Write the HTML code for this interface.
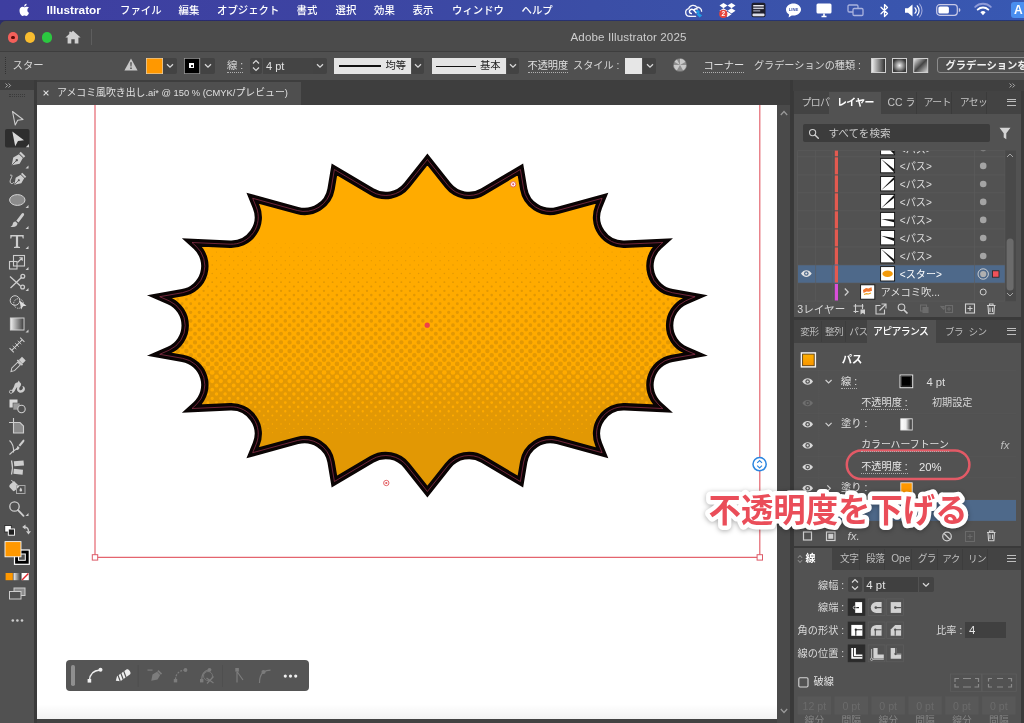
<!DOCTYPE html>
<html lang="ja"><head><meta charset="utf-8"><title>Adobe Illustrator 2025</title>
<style>
html,body{margin:0;padding:0}
body{width:1024px;height:723px;overflow:hidden;position:relative;background:#4e4e4e;font-family:"Liberation Sans","Noto Sans CJK JP",sans-serif;-webkit-font-smoothing:antialiased}
#root{position:absolute;left:0;top:0;width:1024px;height:723px;overflow:hidden;will-change:transform}
.a{position:absolute}
.t{position:absolute;white-space:nowrap;color:#dcdcdc;font-size:10.5px;line-height:12px;height:12px}
.b{font-weight:bold}
.u{border-bottom:1px dotted #b0b0b0;height:12px}
svg{position:absolute;overflow:visible}
/* menubar */
#mb{left:0;top:0;width:1024px;height:21px;background:linear-gradient(90deg,#3e3ea0 0%,#3d43a2 30%,#3b4ea6 58%,#3a53ab 78%,#3858b2 100%);box-shadow:inset 0 -1px 0 rgba(15,15,45,.45)}
#mb .t{color:#fff;font-size:10.6px;top:4px}
/* window */
#win{left:0;top:21px;width:1024px;height:702px;background:#4c4c4c;border-top-left-radius:6px}
#ttl{left:0;top:21px;width:1024px;height:30px;background:#4b4b4b;border-top-left-radius:6px}
#ctl{left:0;top:51px;width:1024px;height:29px;background:#505050;border-top:1px solid #3e3e3e;box-sizing:border-box}
#tabs{left:0;top:80px;width:1024px;height:25px;background:#3e3e3e}
.dd{position:absolute;background:#434343;border-radius:0 2px 2px 0}
.fld{position:absolute;background:#444}
.lt{position:absolute;background:#e4e4e4}
</style></head><body><div id="root">
<div id="mb" class="a">
<svg style="left:19px;top:3px" width="11" height="14" viewBox="0 0 170 205"><path fill="#fff" d="M150 68c-1 1-21 12-21 37 0 29 25 39 26 40-1 1-4 14-13 27-8 11-16 22-28 22s-15-7-30-7c-14 0-19 7-30 7s-19-10-28-23C16 156 8 132 8 109c0-37 24-56 47-56 13 0 23 8 31 8 7 0 19-9 33-9 5 0 24 1 37 16zM108 34c6-7 10-17 10-26 0-1 0-3-1-4-9 0-21 6-27 14-5 6-10 16-10 26 0 2 0 3 1 4h3c9 0 19-6 24-14z"/></svg>
<div class="t b" style="left:46.5px;font-size:11.8px;top:4.2px">Illustrator</div>
<div class="t" style="left:120px;top:4.5px;font-size:10.4px;color:#fff;font-weight:500;">ファイル</div>
<div class="t" style="left:178.5px;top:4.5px;font-size:10.4px;color:#fff;font-weight:500;">編集</div>
<div class="t" style="left:217px;top:4.5px;font-size:10.4px;color:#fff;font-weight:500;">オブジェクト</div>
<div class="t" style="left:296.5px;top:4.5px;font-size:10.4px;color:#fff;font-weight:500;">書式</div>
<div class="t" style="left:335.5px;top:4.5px;font-size:10.4px;color:#fff;font-weight:500;">選択</div>
<div class="t" style="left:374px;top:4.5px;font-size:10.4px;color:#fff;font-weight:500;">効果</div>
<div class="t" style="left:412.5px;top:4.5px;font-size:10.4px;color:#fff;font-weight:500;">表示</div>
<div class="t" style="left:452px;top:4.5px;font-size:10.4px;color:#fff;font-weight:500;">ウィンドウ</div>
<div class="t" style="left:521.5px;top:4.5px;font-size:10.4px;color:#fff;font-weight:500;">ヘルプ</div>
<!-- status icons -->
<svg style="left:685px;top:3.500px" width="18" height="14" viewBox="0 0 18 14"><path d="M4.600 12.300a3.900 3.900 0 0 1-.9-7.700 4.700 4.700 0 0 1 8.300-1.300 4 4 0 0 1 4.600 3.900" fill="none" stroke="#f4f4fb" stroke-width="1.350" stroke-linecap="round"/><path d="M4.600 12.300h6" fill="none" stroke="#f4f4fb" stroke-width="1.350" stroke-linecap="round"/><path d="M6.300 9.600c-1.900-.3-2.600-2.600-1-3.800 1.300-1 2.800-.4 3.800.7l2 2.300M9.300 5.600c.8-.8 1.900-1 2.900-.6" fill="none" stroke="#fff" stroke-width="1.500" stroke-linecap="round"/><path d="M10.600 7.300l2.300-1.600 2.200 2.400-1.300 1 3.400 2.300-2.500 2.200-3.200-3 1.200-1z" fill="#1f9be6"/></svg>
<svg style="left:719.400px;top:2px" width="17" height="16" viewBox="0 0 17 16"><path fill="#fff" d="M4.500 1 8.500 3.600 4.500 6.200.5 3.600zM12.500 1l4 2.600-4 2.600-4-2.600zM.5 8.800l4-2.600 4 2.600-4 2.600zM12.500 6.200l4 2.600-4 2.600-4-2.600zM4.500 12.300l4-2.600 4 2.600-4 2.600z"/><circle cx="4.300" cy="11.900" r="4.100" fill="#e8453c"/><text x="4.300" y="14.200" font-size="6.500" font-weight="bold" fill="#fff" text-anchor="middle" font-family="Liberation Sans, sans-serif">2</text></svg>
<svg style="left:750px;top:2px" width="17" height="16" viewBox="0 0 17 16"><rect x="1.500" y=".8" width="14" height="14.400" rx="2" fill="#1d1d2b"/><rect x="3.200" y="3" width="10.600" height="1.500" fill="#e6e6ee"/><rect x="3.200" y="5.600" width="10.600" height="1.500" fill="#c9c9d6"/><rect x="3.200" y="8.200" width="7" height="1.300" fill="#9d9db0"/><rect x="2.500" y="11.600" width="12" height="2.600" rx="1" fill="#dedee8"/></svg>
<svg style="left:785px;top:1.500px" width="17" height="17" viewBox="0 0 17 17"><path d="M8.500 1.500c4.100 0 7.500 2.700 7.500 6.100 0 3.300-3.400 6-7.500 6-.6 0-1.200-.1-1.800-.2L3.600 15.500l.5-2.900C2.200 11.500 1 9.700 1 7.600c0-3.400 3.400-6.100 7.500-6.100z" fill="#fff"/><text x="8.500" y="9.300" font-size="4.200" font-weight="bold" fill="#3b52a8" text-anchor="middle" font-family="Liberation Sans, sans-serif">LINE</text></svg>
<svg style="left:815px;top:2px" width="18" height="16" viewBox="0 0 18 16"><rect x="1.500" y="1.500" width="15" height="10" rx="1.500" fill="#fff"/><path d="M6.500 14.500h5M9 11.500v3" stroke="#fff" stroke-width="1.600" fill="none"/></svg>
<svg style="left:847px;top:3px" width="18" height="14" viewBox="0 0 18 14"><rect x="1" y="2" width="10" height="7" rx="1.200" fill="none" stroke="#a9b2de" stroke-width="1.300"/><rect x="6" y="5.500" width="10" height="7" rx="1.200" fill="#3a54ac" stroke="#a9b2de" stroke-width="1.300"/></svg>
<svg style="left:880px;top:2.500px" width="9" height="15" viewBox="0 0 9 15"><path d="M1 4.200 7.500 10.500 4.500 13.500V1.500l3 3L1 10.800" fill="none" stroke="#fff" stroke-width="1.250" stroke-linejoin="round" stroke-linecap="round"/></svg>
<svg style="left:904px;top:2.500px" width="20" height="15" viewBox="0 0 20 15"><path d="M1 5.200h3L8.500 1.500v12L4 9.800H1z" fill="#fff"/><path d="M11 4.800a4 4 0 0 1 0 5.400M13.300 2.800a7 7 0 0 1 0 9.400" fill="none" stroke="#fff" stroke-width="1.250" stroke-linecap="round"/><path d="M15.600 1a10 10 0 0 1 0 13" fill="none" stroke="#9fa8dc" stroke-width="1.100" stroke-linecap="round"/></svg>
<svg style="left:936px;top:4px" width="25" height="12" viewBox="0 0 25 12"><rect x=".7" y=".7" width="20.600" height="10.600" rx="3" fill="none" stroke="#c8c9e6" stroke-width="1.200"/><rect x="2.400" y="2.400" width="10.500" height="7.200" rx="1.600" fill="#fff"/><path d="M22.800 4v4c1.200-.4 1.600-1.200 1.600-2s-.4-1.600-1.600-2z" fill="#c8c9e6"/></svg>
<svg style="left:974px;top:3px" width="18" height="13" viewBox="0 0 18 13"><path d="M9 12.200 6.400 9.300a3.700 3.700 0 0 1 5.200 0z" fill="#fff"/><path d="M3.700 6.600a7.600 7.600 0 0 1 10.600 0" fill="none" stroke="#fff" stroke-width="1.900" stroke-linecap="round"/><path d="M1.200 3.900a11.300 11.300 0 0 1 15.600 0" fill="none" stroke="#8f9bd8" stroke-width="1.900" stroke-linecap="round"/></svg>
<div class="a" style="left:1011px;top:2px;width:16px;height:16px;border-radius:3px;background:#4a8ff0"></div>
<div class="t b" style="left:1014px;top:3.500px;font-size:12px;color:#fff;line-height:13px">A</div>
</div>

<div class="a" style="left:0;top:20px;width:10px;height:10px;background:#2b2d68"></div>
<div id="win" class="a"></div>
<div id="ttl" class="a"></div>
<div class="a" style="left:7.600px;top:32.300px;width:10.500px;height:10.500px;border-radius:50%;background:#f4605a"></div>
<div class="a" style="left:11px;top:35.700px;width:3.700px;height:3.700px;border-radius:50%;background:#5a0a08"></div>
<div class="a" style="left:24.600px;top:32.300px;width:10.500px;height:10.500px;border-radius:50%;background:#f9bd2f"></div>
<div class="a" style="left:41.600px;top:32.300px;width:10.500px;height:10.500px;border-radius:50%;background:#2bc840"></div>
<svg style="left:65px;top:30px" width="16" height="14" viewBox="0 0 16 14"><path d="M8 .8 15.600 7.400h-2.200V13.500H9.700V9.200H6.300v4.300H2.600V7.400H.4L4.300 4V1.800h1.800v.7z" fill="#cfcfcf"/></svg>
<div class="a" style="left:90.500px;top:29px;width:1px;height:16px;background:#5e5e5e"></div>
<div class="t" style="left:570.500px;top:30.500px;font-size:11.600px;color:#cdcdcd;letter-spacing:.12px">Adobe Illustrator 2025</div>

<div id="ctl" class="a"></div>
<div class="a" style="left:5px;top:57px;width:0;height:17px;border-left:1px dotted #333"></div>
<div class="t" style="left:12.5px;top:59.5px;font-size:10.4px;color:#d6d6d6;">スター</div>
<svg style="left:124px;top:58px" width="14" height="13" viewBox="0 0 14 13"><path d="M7 .5 13.600 12.500H.4z" fill="#c8c8c8"/><path d="M6.300 4.300h1.400l-.25 4.300h-.9zM6.300 9.600h1.400V11H6.300z" fill="#444"/></svg>
<div class="a" style="left:146px;top:57.500px;width:16.500px;height:16px;background:#ff9800;box-shadow:inset 0 0 0 .6px #d9d9d9"></div>
<div class="dd" style="left:163px;top:57.500px;width:14px;height:16px"></div>
<svg style="left:166px;top:63px" width="8" height="6" viewBox="0 0 8 6"><path d="M1 1.200 4 4.200 7 1.200" fill="none" stroke="#d8d8d8" stroke-width="1.300"/></svg>
<div class="a" style="left:183.500px;top:57.500px;width:16px;height:16px;background:#000;box-shadow:inset 0 0 0 .8px #9a9a9a"></div>
<div class="a" style="left:189px;top:63px;width:5px;height:5px;background:#fff"></div>
<div class="a" style="left:190.500px;top:64.500px;width:2px;height:2px;background:#222"></div>
<div class="dd" style="left:200.500px;top:57.500px;width:14px;height:16px"></div>
<svg style="left:203.500px;top:63px" width="8" height="6" viewBox="0 0 8 6"><path d="M1 1.200 4 4.200 7 1.200" fill="none" stroke="#d8d8d8" stroke-width="1.300"/></svg>
<div class="t u" style="left:227px;top:59.500px;font-size:10.4px;color:#d6d6d6;">線<span style="margin-left:.28em"></span>:</div>
<div class="dd" style="left:249.500px;top:57.500px;width:12px;height:16px;border-radius:2px"></div>
<svg style="left:251.500px;top:59px" width="8" height="13" viewBox="0 0 8 13"><path d="M1 4.500 4 1.500 7 4.500M1 8.500 4 11.500 7 8.500" fill="none" stroke="#d8d8d8" stroke-width="1.200"/></svg>
<div class="fld" style="left:263px;top:57.500px;width:49.500px;height:16px"></div>
<div class="t" style="left:266px;top:59.500px;font-size:11px;color:#e2e2e2">4 pt</div>
<div class="dd" style="left:313px;top:57.500px;width:13.500px;height:16px"></div>
<svg style="left:315.500px;top:63px" width="8" height="6" viewBox="0 0 8 6"><path d="M1 1.200 4 4.200 7 1.200" fill="none" stroke="#d8d8d8" stroke-width="1.300"/></svg>
<div class="lt" style="left:333.500px;top:57.500px;width:77.500px;height:16.500px"></div>
<div class="a" style="left:338.500px;top:65px;width:42px;height:2px;background:#111"></div>
<div class="t" style="left:385.500px;top:59.500px;font-size:10.3px;color:#1c1c1c;">均等</div>
<div class="dd" style="left:412px;top:57.500px;width:12px;height:16.500px"></div>
<svg style="left:414px;top:63px" width="8" height="6" viewBox="0 0 8 6"><path d="M1 1.200 4 4.200 7 1.200" fill="none" stroke="#d8d8d8" stroke-width="1.300"/></svg>
<div class="lt" style="left:431.500px;top:57.500px;width:74px;height:16.500px"></div>
<div class="a" style="left:436px;top:65.500px;width:39.500px;height:1px;background:#111"></div>
<div class="t" style="left:480px;top:59.500px;font-size:10.3px;color:#1c1c1c;">基本</div>
<div class="dd" style="left:506.500px;top:57.500px;width:12.500px;height:16.500px"></div>
<svg style="left:508.700px;top:63px" width="8" height="6" viewBox="0 0 8 6"><path d="M1 1.200 4 4.200 7 1.200" fill="none" stroke="#d8d8d8" stroke-width="1.300"/></svg>
<div class="t u" style="left:527.500px;top:59.500px;font-size:10.2px;color:#e0e0e0;">不透明度</div>
<div class="t" style="left:573px;top:59.500px;font-size:10.2px;color:#d6d6d6;">スタイル<span style="margin-left:.28em"></span>:</div>
<div class="a" style="left:625px;top:57.500px;width:17px;height:16.500px;background:#e6e6e6"></div>
<div class="dd" style="left:643px;top:57.500px;width:13px;height:16.500px"></div>
<svg style="left:645.500px;top:63px" width="8" height="6" viewBox="0 0 8 6"><path d="M1 1.200 4 4.200 7 1.200" fill="none" stroke="#d8d8d8" stroke-width="1.300"/></svg>
<svg style="left:672.500px;top:57.700px" width="14" height="14" viewBox="0 0 14 14"><circle cx="7" cy="7" r="6.600" fill="#8e8e8e"/><path d="M7 7 7 .4A6.600 6.600 0 0 1 12.700 3.700zM7 7 13.600 7A6.600 6.600 0 0 1 10.300 12.700zM7 7 3.700 12.700A6.600 6.600 0 0 1 .4 7zM7 7 1.300 3.700A6.600 6.600 0 0 1 3.700 1.300z" fill="#c9c9c9"/><circle cx="7" cy="7" r="6.600" fill="none" stroke="#6a6a6a" stroke-width=".6"/></svg>
<div class="t u" style="left:703.400px;top:59.500px;font-size:10.2px;color:#e0e0e0;">コーナー</div>
<div class="t" style="left:754px;top:59.500px;font-size:10.15px;color:#d6d6d6;">グラデーションの種類<span style="margin-left:.28em"></span>:</div>
<svg style="left:870.500px;top:57.500px" width="58" height="15" viewBox="0 0 58 15"><defs><linearGradient id="lg1"><stop offset="0" stop-color="#f2f2f2"/><stop offset="1" stop-color="#2a2a2a"/></linearGradient><radialGradient id="rg1"><stop offset="0" stop-color="#f2f2f2"/><stop offset="1" stop-color="#3a3a3a"/></radialGradient><linearGradient id="lg2" x1="0" y1="0" x2="1" y2="1"><stop offset="0" stop-color="#eee"/><stop offset=".5" stop-color="#444"/><stop offset="1" stop-color="#ddd"/></linearGradient></defs><rect x=".5" y=".5" width="14" height="14" fill="url(#lg1)" stroke="#cfcfcf"/><rect x="21.500" y=".5" width="14" height="14" fill="url(#rg1)" stroke="#cfcfcf"/><rect x="42.700" y=".5" width="14" height="14" fill="url(#lg2)" stroke="#cfcfcf"/></svg>
<div class="a" style="left:936.500px;top:57px;width:100px;height:15.500px;border:1px solid #8c8c8c;border-radius:3px;box-sizing:border-box"></div>
<div class="t b" style="left:945.500px;top:59.500px;font-size:10.3px;color:#f0f0f0;">グラデーションを</div>

<div id="tabs" class="a"></div>
<div class="a" style="left:0;top:80px;width:34px;height:10px;background:#3f3f3f"></div>
<div class="a" style="left:0;top:90px;width:34px;height:633px;background:#515151"></div>
<div class="a" style="left:34px;top:80px;width:2.500px;height:643px;background:#3a3a3a"></div>
<svg style="left:4.5px;top:82.5px" width="7" height="5" viewBox="0 0 7 5"><path d="M.6 .5 2.600 2.500 .6 4.500M3.600 .5 5.600 2.500 3.600 4.500" fill="none" stroke="#c4c4c4" stroke-width=".8"/></svg>
<div class="a" style="left:9px;top:94px;width:16px;height:3px;border-top:1px dotted #3a3a3a;border-bottom:1px dotted #3a3a3a;box-sizing:border-box"></div>
<div class="a" style="left:36.500px;top:81.500px;width:264px;height:24px;background:#4f4f4f"></div>
<svg style="left:43px;top:90.300px" width="6" height="6" viewBox="0 0 6 6"><path d="M.6 .6 5.400 5.400M5.400 .6 .6 5.400" fill="none" stroke="#e0e0e0" stroke-width="1.100"/></svg>
<div class="t" style="left:57px;top:87px;font-size:9.9px;color:#e0e0e0;">アメコミ風吹き出し<span style="font-size:9.35px">.ai* @ 150 % (CMYK/</span>プレビュー<span style="font-size:9.35px">)</span></div>

<div class="a" style="left:36.500px;top:105.300px;width:740.500px;height:613.400px;background:#fff"></div>
<div class="a" id="cvshade" style="left:36.500px;top:704px;width:740.500px;height:14.700px;background:linear-gradient(rgba(0,0,0,0),rgba(0,0,0,.05))"></div>
<div class="a" style="left:36.500px;top:718.700px;width:753.500px;height:5px;background:#424242"></div>
<div class="a" style="left:777px;top:105px;width:13px;height:618px;background:#4a4a4a"></div>
<div class="a" style="left:790px;top:80px;width:2.800px;height:643px;background:#393939"></div>
<svg style="left:780px;top:110px" width="8" height="6" viewBox="0 0 8 6"><path d="M.8 5 4 1.500 7.200 5" fill="none" stroke="#9a9a9a" stroke-width="1.200"/></svg>
<svg style="left:780px;top:708px" width="8" height="6" viewBox="0 0 8 6"><path d="M.8 1 4 4.500 7.200 1" fill="none" stroke="#9a9a9a" stroke-width="1.200"/></svg>
<svg style="left:0;top:0" width="1024" height="723" viewBox="0 0 1024 723">
<defs>
<clipPath id="cv"><rect x="36.500" y="105" width="740.500" height="613"/></clipPath>
<pattern id="ht" width="8.600" height="8.600" patternUnits="userSpaceOnUse" patternTransform="translate(427.200 325.200) rotate(45)"><circle cx="0" cy="0" r="2"/><circle cx="8.600" cy="0" r="2"/><circle cx="0" cy="8.600" r="2"/><circle cx="8.600" cy="8.600" r="2"/></pattern>
<clipPath id="sc"><path d="M427.4 159.5L406.9 185.3A27.0 27.0 0 0 1 372.0 191.7L334.4 169.5L331.1 189.0A27.0 27.0 0 0 1 297.4 210.5L252.7 198.3L256.2 206.9A27.0 27.0 0 0 1 230.1 244.2L192.0 242.5L196.0 246.1A27.0 27.0 0 0 1 182.5 292.7L159.7 296.7L169.1 300.8A27.0 27.0 0 0 1 169.1 350.2L159.7 354.3L182.5 358.3A27.0 27.0 0 0 1 196.0 404.9L192.0 408.5L230.1 406.8A27.0 27.0 0 0 1 256.2 444.1L252.7 452.7L297.4 440.5A27.0 27.0 0 0 1 331.1 462.0L334.4 481.5L372.0 459.3A27.0 27.0 0 0 1 406.9 465.7L427.4 491.5L447.9 465.7A27.0 27.0 0 0 1 482.8 459.3L520.4 481.5L523.7 462.0A27.0 27.0 0 0 1 557.4 440.5L602.1 452.7L598.6 444.1A27.0 27.0 0 0 1 624.7 406.8L662.8 408.5L658.8 404.9A27.0 27.0 0 0 1 672.3 358.3L695.1 354.3L685.7 350.2A27.0 27.0 0 0 1 685.7 300.8L695.1 296.7L672.3 292.7A27.0 27.0 0 0 1 658.8 246.1L662.8 242.5L624.7 244.2A27.0 27.0 0 0 1 598.6 206.9L602.1 198.3L557.4 210.5A27.0 27.0 0 0 1 523.7 189.0L520.4 169.5L482.8 191.7A27.0 27.0 0 0 1 447.9 185.3L427.4 159.5Z"/></clipPath>
</defs>
<g clip-path="url(#cv)">
<path d="M95 100V557.400H759.800V100" fill="none" stroke="#e4646e" stroke-width="1.200"/>
<path id="starp" d="M427.4 159.5L406.9 185.3A27.0 27.0 0 0 1 372.0 191.7L334.4 169.5L331.1 189.0A27.0 27.0 0 0 1 297.4 210.5L252.7 198.3L256.2 206.9A27.0 27.0 0 0 1 230.1 244.2L192.0 242.5L196.0 246.1A27.0 27.0 0 0 1 182.5 292.7L159.7 296.7L169.1 300.8A27.0 27.0 0 0 1 169.1 350.2L159.7 354.3L182.5 358.3A27.0 27.0 0 0 1 196.0 404.9L192.0 408.5L230.1 406.8A27.0 27.0 0 0 1 256.2 444.1L252.7 452.7L297.4 440.5A27.0 27.0 0 0 1 331.1 462.0L334.4 481.5L372.0 459.3A27.0 27.0 0 0 1 406.9 465.7L427.4 491.5L447.9 465.7A27.0 27.0 0 0 1 482.8 459.3L520.4 481.5L523.7 462.0A27.0 27.0 0 0 1 557.4 440.5L602.1 452.7L598.6 444.1A27.0 27.0 0 0 1 624.7 406.8L662.8 408.5L658.8 404.9A27.0 27.0 0 0 1 672.3 358.3L695.1 354.3L685.7 350.2A27.0 27.0 0 0 1 685.7 300.8L695.1 296.7L672.3 292.7A27.0 27.0 0 0 1 658.8 246.1L662.8 242.5L624.7 244.2A27.0 27.0 0 0 1 598.6 206.9L602.1 198.3L557.4 210.5A27.0 27.0 0 0 1 523.7 189.0L520.4 169.5L482.8 191.7A27.0 27.0 0 0 1 447.9 185.3L427.4 159.5Z" fill="#ffab00"/>
<g clip-path="url(#sc)"><rect x="140" y="370.35" width="576" height="129.65" fill="#e29804"/><g stroke="#e29804" stroke-linecap="round" fill="none" stroke-dasharray="0 8.6"><path d="M139.10 243.50H716" stroke-width="0.50"/><path d="M134.80 247.80H716" stroke-width="0.74"/><path d="M139.10 252.10H716" stroke-width="0.92"/><path d="M134.80 256.40H716" stroke-width="1.08"/><path d="M139.10 260.70H716" stroke-width="1.21"/><path d="M134.80 265.00H716" stroke-width="1.33"/><path d="M139.10 269.30H716" stroke-width="1.44"/><path d="M134.80 273.60H716" stroke-width="1.54"/><path d="M139.10 277.90H716" stroke-width="1.64"/><path d="M134.80 282.20H716" stroke-width="1.84"/><path d="M139.10 286.50H716" stroke-width="2.11"/><path d="M134.80 290.80H716" stroke-width="2.35"/><path d="M139.10 295.10H716" stroke-width="2.57"/><path d="M134.80 299.40H716" stroke-width="2.77"/><path d="M139.10 303.70H716" stroke-width="2.96"/><path d="M134.80 308.00H716" stroke-width="3.14"/><path d="M139.10 312.30H716" stroke-width="3.31"/><path d="M134.80 316.60H716" stroke-width="3.47"/><path d="M139.10 320.90H716" stroke-width="3.62"/><path d="M134.80 325.20H716" stroke-width="3.76"/><path d="M139.10 329.50H716" stroke-width="3.88"/><path d="M134.80 333.80H716" stroke-width="4.00"/><path d="M139.10 338.10H716" stroke-width="4.11"/><path d="M134.80 342.40H716" stroke-width="4.22"/><path d="M139.10 346.70H716" stroke-width="4.32"/><path d="M134.80 351.00H716" stroke-width="4.42"/><path d="M139.10 355.30H716" stroke-width="4.52"/><path d="M134.80 359.60H716" stroke-width="4.62"/><path d="M139.10 363.90H716" stroke-width="4.72"/><path d="M134.80 368.20H716" stroke-width="4.81"/></g><g stroke="#ffab00" stroke-linecap="round" fill="none" stroke-dasharray="0 8.6"><path d="M134.80 372.50H716" stroke-width="4.73"/><path d="M139.10 376.80H716" stroke-width="4.51"/><path d="M134.80 381.10H716" stroke-width="4.28"/><path d="M139.10 385.40H716" stroke-width="4.04"/><path d="M134.80 389.70H716" stroke-width="3.78"/><path d="M139.10 394.00H716" stroke-width="3.50"/><path d="M134.80 398.30H716" stroke-width="3.20"/><path d="M139.10 402.60H716" stroke-width="2.92"/><path d="M134.80 406.90H716" stroke-width="2.66"/><path d="M139.10 411.20H716" stroke-width="2.37"/><path d="M134.80 415.50H716" stroke-width="2.04"/><path d="M139.10 419.80H716" stroke-width="1.72"/><path d="M134.80 424.10H716" stroke-width="1.48"/><path d="M139.10 428.40H716" stroke-width="1.18"/><path d="M134.80 432.70H716" stroke-width="0.78"/></g></g>
<path d="M427.4 159.5L406.9 185.3A27.0 27.0 0 0 1 372.0 191.7L334.4 169.5L331.1 189.0A27.0 27.0 0 0 1 297.4 210.5L252.7 198.3L256.2 206.9A27.0 27.0 0 0 1 230.1 244.2L192.0 242.5L196.0 246.1A27.0 27.0 0 0 1 182.5 292.7L159.7 296.7L169.1 300.8A27.0 27.0 0 0 1 169.1 350.2L159.7 354.3L182.5 358.3A27.0 27.0 0 0 1 196.0 404.9L192.0 408.5L230.1 406.8A27.0 27.0 0 0 1 256.2 444.1L252.7 452.7L297.4 440.5A27.0 27.0 0 0 1 331.1 462.0L334.4 481.5L372.0 459.3A27.0 27.0 0 0 1 406.9 465.7L427.4 491.5L447.9 465.7A27.0 27.0 0 0 1 482.8 459.3L520.4 481.5L523.7 462.0A27.0 27.0 0 0 1 557.4 440.5L602.1 452.7L598.6 444.1A27.0 27.0 0 0 1 624.7 406.8L662.8 408.5L658.8 404.9A27.0 27.0 0 0 1 672.3 358.3L695.1 354.3L685.7 350.2A27.0 27.0 0 0 1 685.7 300.8L695.1 296.7L672.3 292.7A27.0 27.0 0 0 1 658.8 246.1L662.8 242.5L624.7 244.2A27.0 27.0 0 0 1 598.6 206.9L602.1 198.3L557.4 210.5A27.0 27.0 0 0 1 523.7 189.0L520.4 169.5L482.8 191.7A27.0 27.0 0 0 1 447.9 185.3L427.4 159.5Z" fill="none" stroke="#0a0404" stroke-width="7.4" stroke-linejoin="miter" stroke-miterlimit="10"/>
<path d="M427.4 159.5L406.9 185.3A27.0 27.0 0 0 1 372.0 191.7L334.4 169.5L331.1 189.0A27.0 27.0 0 0 1 297.4 210.5L252.7 198.3L256.2 206.9A27.0 27.0 0 0 1 230.1 244.2L192.0 242.5L196.0 246.1A27.0 27.0 0 0 1 182.5 292.7L159.7 296.7L169.1 300.8A27.0 27.0 0 0 1 169.1 350.2L159.7 354.3L182.5 358.3A27.0 27.0 0 0 1 196.0 404.9L192.0 408.5L230.1 406.8A27.0 27.0 0 0 1 256.2 444.1L252.7 452.7L297.4 440.5A27.0 27.0 0 0 1 331.1 462.0L334.4 481.5L372.0 459.3A27.0 27.0 0 0 1 406.9 465.7L427.4 491.5L447.9 465.7A27.0 27.0 0 0 1 482.8 459.3L520.4 481.5L523.7 462.0A27.0 27.0 0 0 1 557.4 440.5L602.1 452.7L598.6 444.1A27.0 27.0 0 0 1 624.7 406.8L662.8 408.5L658.8 404.9A27.0 27.0 0 0 1 672.3 358.3L695.1 354.3L685.7 350.2A27.0 27.0 0 0 1 685.7 300.8L695.1 296.7L672.3 292.7A27.0 27.0 0 0 1 658.8 246.1L662.8 242.5L624.7 244.2A27.0 27.0 0 0 1 598.6 206.9L602.1 198.3L557.4 210.5A27.0 27.0 0 0 1 523.7 189.0L520.4 169.5L482.8 191.7A27.0 27.0 0 0 1 447.9 185.3L427.4 159.5Z" fill="none" stroke="#9a3350" stroke-width=".7"/>
<rect x="92.300" y="554.700" width="5.400" height="5.400" fill="#fff" stroke="#dc5a68" stroke-width="1"/>
<rect x="757.100" y="554.700" width="5.400" height="5.400" fill="#fff" stroke="#dc5a68" stroke-width="1"/>
<circle cx="427.200" cy="325.200" r="2.600" fill="#ee3f4a"/>
<circle cx="513.200" cy="184.300" r="2.700" fill="#fff" stroke="#e2585c" stroke-width=".9"/><circle cx="513.200" cy="184.300" r="1.100" fill="#e2585c"/>
<circle cx="386.300" cy="483" r="2.700" fill="#fff" stroke="#e2585c" stroke-width=".9"/><circle cx="386.300" cy="483" r="1.100" fill="#e2585c"/>
<circle cx="759.600" cy="464.200" r="6.600" fill="#fff" stroke="#2a86e0" stroke-width="1.500"/><path d="M757.200 462.800 759.600 460.500 762 462.800M757.200 465.600 759.600 467.900 762 465.600" fill="none" stroke="#2a86e0" stroke-width="1.100"/>
</g>
</svg>
<!-- floating toolbar -->
<div class="a" style="left:66.3px;top:660.4px;width:242.6px;height:30.5px;background:#555;border-radius:4px"></div>
<div class="a" style="left:71.4px;top:664.7px;width:3.6px;height:21.6px;background:#8f8f8f;border-radius:1.8px"></div>
<svg style="left:0;top:0" width="320" height="723" viewBox="0 0 320 723">
<g fill="none" stroke="#efefef" stroke-width="1.5" stroke-linecap="round"><path d="M89.500 680.500c.2-6 4-10 10.500-10.500"/></g>
<rect x="87.600" y="679" width="3.600" height="3.600" fill="#efefef"/><circle cx="100.500" cy="669.800" r="2" fill="#efefef"/>
<g transform="translate(122.800 675.800) rotate(-35)"><path d="M-8.500 0l3.500-3h11.500c1.200 0 2 1.300 2 3s-.8 3-2 3H-5z" fill="#efefef"/><path d="M-3.500 -3.500l-1.800 7M0 -3.500l-1.800 7M3.500 -3.500l-1.800 7" stroke="#555" stroke-width="1.200"/></g>
<path d="M138.200 665v22M222.500 665v22" stroke="#4f4f4f" stroke-width="1"/>
<g fill="#7c7c7c"><g transform="translate(155.500 676.500) rotate(45) scale(.8)"><path d="M-3.200 -8.500h6.400v2.200h-6.400zM-2.800 -5.500h5.600l1.700 6.300-4.500 6.700-4.500-6.700z"/></g><path d="M147.500 669.500h5v1.200h-5z"/>
<rect x="173.800" y="679" width="3.400" height="3.400"/><circle cx="185.500" cy="670" r="1.900"/>
<rect x="200" y="679" width="3.400" height="3.400"/><circle cx="209.500" cy="669.800" r="1.900"/>
<rect x="235.300" y="668" width="3.600" height="3.600"/>
<circle cx="263.500" cy="672" r="2.100"/></g>
<g fill="none" stroke="#7c7c7c" stroke-width="1.200"><path d="M175.500 679.500c.2-5 3-8.500 8.500-9.300" stroke-dasharray="2 1.300"/>
<path d="M201.700 679.500c.2-5 2.500-8.500 6.500-9.500M206.500 678 213.500 683M213.500 676.500 207 683.500"/><circle cx="208" cy="676" r="4.500" stroke-width=".8"/>
<path d="M237 671.500v11M237 671.500 243 680"/>
<path d="M259.500 683c0-5 1.500-9 4-11 2-1.300 4.500-1.800 7-1.800" /></g>
<circle cx="285.300" cy="676.100" r="1.600" fill="#f0f0f0"/><circle cx="290.500" cy="676.100" r="1.600" fill="#f0f0f0"/><circle cx="295.700" cy="676.100" r="1.600" fill="#f0f0f0"/>
</svg>

<svg style="left:0;top:0" width="36" height="723" viewBox="0 0 36 723" fill="#cdcdcd" stroke="none">
<!-- direct selection -->
<path d="M12.500 111.500 23 119.500 17.700 120.300 15.200 125z" fill="none" stroke="#cdcdcd" stroke-width="1.100" stroke-linejoin="round"/>
<!-- selection (active) -->
<rect x="5" y="129" width="24.500" height="18.500" rx="2" fill="#2e2e2e"/>
<path d="M12.300 131.500 24 140.300 18 141 15.200 146.200z" fill="#d9d9d9"/>
<path d="M29 144v3.200h-3.200z" fill="#d0d0d0"/>
<!-- pen -->
<g transform="translate(17 160) rotate(45)"><path d="M-3.200 -8.500h6.400v2.200h-6.400zM-2.800 -5.500h5.600l1.700 6.300-4.500 6.700-4.500-6.700z"/><circle cx="0" cy="0.300" r="1.200" fill="#515151"/><path d="M0 1v6" stroke="#515151" stroke-width=".8"/></g>
<path d="M28.500 165.500v3h-3z"/>
<!-- curvature pen -->
<g transform="translate(19 180) rotate(45) scale(.88)"><path d="M-3.200 -8.500h6.400v2.200h-6.400zM-2.800 -5.500h5.600l1.700 6.300-4.500 6.700-4.500-6.700z"/><circle cx="0" cy="0.300" r="1.200" fill="#515151"/><path d="M0 1v6" stroke="#515151" stroke-width=".8"/></g>
<path d="M10 175.500c1.500-1.500 2.500 0 1.500 2-1 2.200-2.300 4.500-.6 5.800 1 .7 2.400 0 3-1" fill="none" stroke="#cdcdcd" stroke-width="1"/>
<!-- ellipse -->
<ellipse cx="17.300" cy="200" rx="7.700" ry="5.400" fill="#8b8b8b" stroke="#d3d3d3" stroke-width="1"/>
<path d="M28.500 205v3h-3z"/>
<!-- brush -->
<path d="M23.500 213.200c.8.600.8 1.400.3 2.200l-5.300 7-2.200-1.700 5.300-7c.6-.7 1.300-1 1.900-.5zM15.500 221.600l2 1.600c0 2.500-2.500 4.300-7 3.500 1.800-.8 2-1.800 2.300-3 .4-1.400 1.500-2.200 2.700-2.100z"/>
<path d="M28.500 226v3h-3z"/>
<!-- T -->
<path d="M10.300 235h13.400v3.600h-1l-.5-2.200h-4.100v10.200l1.900.4v.9h-6v-.9l1.900-.4V236.400h-4.100l-.5 2.200h-1z"/>
<path d="M28.500 246v3h-3z"/>
<!-- scale -->
<g fill="none" stroke="#cdcdcd" stroke-width="1.100"><rect x="9.500" y="261.500" width="7.500" height="7.500"/><rect x="13.500" y="255.500" width="11" height="10.500"/><path d="M17.500 262.500 22 258M19.300 257.800H22.300V260.800"/></g>
<path d="M28.500 267v3h-3z"/>
<!-- scissors -->
<g fill="none" stroke="#cdcdcd" stroke-width="1.300"><path d="M10 276.500 20.500 286M10.500 288 22 277"/><circle cx="22.800" cy="276.300" r="1.900"/><circle cx="22.600" cy="287" r="1.900"/></g>
<path d="M28.500 288v3h-3z"/>
<!-- shape builder -->
<g fill="none" stroke="#cdcdcd" stroke-width="1"><circle cx="15" cy="300.500" r="4.800"/><circle cx="18.500" cy="303.500" r="4.800" stroke-dasharray="1.500 1"/></g>
<path d="M19.500 300.500 26.500 305.800 22.900 306.300 21.200 309.500z" fill="#dcdcdc"/>
<!-- gradient -->
<defs><linearGradient id="tg"><stop offset="0" stop-color="#f0f0f0"/><stop offset="1" stop-color="#3a3a3a"/></linearGradient></defs>
<rect x="10.400" y="318" width="13.600" height="12" fill="url(#tg)" stroke="#d0d0d0" stroke-width="1"/>
<path d="M28.500 329.500v3h-3z"/>
<!-- measure -->
<g transform="translate(17 345) rotate(-45)" fill="none" stroke="#cdcdcd" stroke-width="1.100"><path d="M-7.500 -3v6M7.500 -3v6M-7.500 0h15" /><path d="M-3.500 -2.500v5M0 -2.500v5M3.500 -2.500v5" stroke-width=".8"/></g>
<!-- eyedropper -->
<g transform="translate(17.500 365) rotate(45)"><path d="M-2.600 -9h5.200v4.500h-5.200z"/><path d="M-3.600 -4.200h7.200v1.600h-7.200z"/><path d="M-1.900 -2.200h3.800v8.300L0 9.200-1.900 6.100z" fill="none" stroke="#cdcdcd" stroke-width="1"/></g>
<!-- puppet / symbol -->
<path d="M11 392.500c1-3 2.500-4.200 3.500-7.500.3-1.500 1.600-2.600 3-2.400l1.300-2.100.9 1.800c1.500.6 1.800 2.300 1 3.500-.8 1.300-1.800 2.200-1.300 3.700.5 1.200 2 1.100 3-.2.900-1.200.6-2.500-.2-3.300 2.500.2 3.500 2.700 2.200 4.800-1.500 2.300-4.700 2.700-6.500.7-1.300-1.400-1.200-3-.6-4.500-1.500 1.200-2 3.300-3.400 4.900-.8.900-2 1.300-2.900.6z"/>
<circle cx="11" cy="391.800" r="1.600" fill="#515151" stroke="#cdcdcd" stroke-width=".8"/>
<!-- blend -->
<rect x="9.500" y="399.500" width="8" height="8" fill="#dadada"/><rect x="13" y="403" width="7" height="7" fill="#9a9a9a" stroke="#515151" stroke-width=".6"/><circle cx="21.500" cy="409" r="3.700" fill="#515151" stroke="#cdcdcd" stroke-width="1.100"/>
<!-- artboard -->
<path d="M13.500 418v4M9 422.500h4" fill="none" stroke="#cdcdcd" stroke-width="1.100"/><path d="M13.500 422.500h6.500l3.500 3.500v7h-10z" fill="#8b8b8b" stroke="#cdcdcd" stroke-width="1.100"/>
<!-- slice -->
<g fill="none" stroke="#cdcdcd" stroke-width="1.100"><path d="M9.500 440.500c3 2.500 4.500 5.500 4 12M9.500 454.500c3-3 6-5 9-7"/></g><path d="M24 439.500c.8.800.3 2-.3 2.800l-3.500 4.300-1.700-1.400 3.500-4.300c.6-.8 1.400-1.700 2-1.400zM17.800 446l1.700 1.400c-.3 1.800-1.600 2.700-3.800 2.600 1-.8 1-1.500 1.200-2.400.1-.8.400-1.400.9-1.600z"/>
<!-- column/flag -->
<path d="M11.500 460.500c1.200 4.500 1.200 9.500 0 14" fill="none" stroke="#cdcdcd" stroke-width="1.200"/><path d="M13.800 461.300l9.700-.8.500 5-9.700.8zM13.800 468.800l9.200 1 -.4 5-9.200-1z"/>
<!-- paint bucket -->
<path d="M10 484.500l4-3.500 5.500 5.500-4.800 4.300c-.6.500-1.300.5-1.800 0l-3.300-3.500c-.5-.6-.4-2 .4-2.800z"/><path d="M11.300 480l6 6" stroke="#cdcdcd" stroke-width="1" fill="none"/><path d="M20.800 487.500c.7 1.200 1.300 2 1.300 2.800a1.300 1.300 0 0 1-2.600 0c0-.8.600-1.600 1.300-2.800z"/><rect x="16.500" y="485.500" width="8.500" height="8" fill="none" stroke="#a8a8a8" stroke-width="1"/>
<!-- zoom -->
<circle cx="14.500" cy="506.500" r="4.700" fill="none" stroke="#cdcdcd" stroke-width="1.300"/><path d="M18 510.200 23.500 515.800" stroke="#cdcdcd" stroke-width="1.900" stroke-linecap="round"/>
<path d="M28.500 513v3h-3z"/>
<!-- default / swap -->
<rect x="4.800" y="525.500" width="6.500" height="6.500" fill="#fff" stroke="#1e1e1e" stroke-width=".8"/><rect x="8.300" y="529" width="6.200" height="6.200" fill="#1e1e1e" stroke="#fff" stroke-width=".9"/>
<path d="M24.500 527c2.500.2 4 1.800 4 4.500" fill="none" stroke="#cdcdcd" stroke-width="1.300"/><path d="M25.500 524.500v5l-3.300-2.500zM26 531.200h5l-2.500 3.300z"/>
<!-- fill & stroke -->
<rect x="13.900" y="549.400" width="16" height="15.500" fill="#fff"/><rect x="15.100" y="550.600" width="13.600" height="13.100" fill="#000"/><rect x="18" y="553.500" width="7.800" height="7.300" fill="#fff"/><rect x="19" y="554.500" width="5.800" height="5.300" fill="#515151"/>
<rect x="5" y="541.600" width="16" height="15.200" fill="#ff9800" stroke="#f4f4f4" stroke-width=".9"/>
<!-- mini swatches -->
<rect x="5.600" y="573" width="7.200" height="7.200" fill="#ff9800"/>
<rect x="13.600" y="573" width="7.200" height="7.200" fill="url(#tg)"/>
<rect x="21.600" y="573" width="7.200" height="7.200" fill="#fff"/><path d="M22 579.900 28.400 573.400" stroke="#e0282e" stroke-width="1.400"/>
<!-- screen mode -->
<rect x="14" y="588" width="11" height="7.500" fill="#8b8b8b" stroke="#cdcdcd" stroke-width="1"/><rect x="9.500" y="591.500" width="11.500" height="7.500" fill="#515151" stroke="#cdcdcd" stroke-width="1"/>
<!-- more -->
<circle cx="12.800" cy="620.500" r="1.300"/><circle cx="17.400" cy="620.500" r="1.300"/><circle cx="22" cy="620.500" r="1.300"/>
</svg>

<div class="a" style="left:792.5px;top:80px;width:231.5px;height:643px;background:#3a3a3a"></div>
<div class="a" style="left:792.5px;top:80px;width:231.5px;height:10.5px;background:#404040"></div>
<svg style="left:1009px;top:82.500px" width="7" height="5" viewBox="0 0 7 5"><path d="M.6 .5 2.600 2.500 .6 4.500M3.600 .5 5.600 2.500 3.600 4.500" fill="none" stroke="#c4c4c4" stroke-width=".8"/></svg>
<div class="a" style="left:793.5px;top:90.5px;width:227px;height:23px;background:#434343"></div>
<div class="a" style="left:793.5px;top:113.5px;width:227px;height:203.5px;background:#525252"></div>
<div class="a" style="left:829px;top:91.5px;width:51.5px;height:23px;background:#525252"></div>
<div class="a tabdiv" style="left:916.2px;top:91.5px;width:1px;height:22px;background:#3b3b3b"></div><div class="a tabdiv" style="left:951px;top:91.5px;width:1px;height:22px;background:#3b3b3b"></div><div class="a tabdiv" style="left:986.3px;top:91.5px;width:1px;height:22px;background:#3b3b3b"></div>
<div class="t" style="left:801.4px;top:96.5px;font-size:9.9px;color:#c4c4c4;letter-spacing:-.06em;">プロパ</div>
<div class="t b" style="left:837px;top:96.5px;font-size:9.9px;color:#ffffff;letter-spacing:-.06em;">レイヤー</div>
<div class="t" style="left:887.5px;top:96.5px;font-size:9.9px;color:#c4c4c4;"><span style="font-size:10.4px">CC </span>ラ</div>
<div class="t" style="left:923.5px;top:96.5px;font-size:9.9px;color:#c4c4c4;letter-spacing:-.06em;">アート</div>
<div class="t" style="left:959.7px;top:96.5px;font-size:9.9px;color:#c4c4c4;letter-spacing:-.06em;">アセッ</div>
<div class="a" style="left:1006.5px;top:98.5px;width:9px;height:7px;border-top:1.1px solid #bebebe;border-bottom:1.1px solid #bebebe;box-sizing:border-box"></div><div class="a" style="left:1006.5px;top:101.35px;width:9px;height:1.1px;background:#bebebe"></div>
<div class="a" style="left:802.5px;top:124px;width:187.5px;height:18px;background:#3c3c3c;border-radius:2px"></div>
<svg style="left:807.5px;top:127.5px" width="12" height="12" viewBox="0 0 12 12"><circle cx="4.6" cy="4.6" r="3.1" fill="none" stroke="#d0d0d0" stroke-width="1.1"/><path d="M7 7 10.300 10.300" stroke="#d0d0d0" stroke-width="1.400" stroke-linecap="round"/></svg>
<div class="t" style="left:828.4px;top:127px;font-size:10.6px;color:#c9c9c9;">すべてを検索</div>
<svg style="left:999px;top:127px" width="12" height="13" viewBox="0 0 12 13"><path d="M.5 .8h11L7.3 6.3v5.900L4.700 10.400V6.300z" fill="#d4d4d4"/></svg>
<div class="a" style="left:797.5px;top:265px;width:207.5px;height:18px;background:#4e698a"></div>
<svg style="left:0;top:0" width="1024" height="723" viewBox="0 0 1024 723"><g stroke="#5d5d5d" stroke-width=".6" fill="none">
<path d="M797.5 150.6H1005"/>
<path d="M797.5 156.8H1005"/>
<path d="M797.5 174.9H1005"/>
<path d="M797.5 192.8H1005"/>
<path d="M797.5 210.8H1005"/>
<path d="M797.5 228.9H1005"/>
<path d="M797.5 246.9H1005"/>
<path d="M797.5 265H1005"/>
<path d="M797.5 283H1005"/>
<path d="M797.5 301.1H1005"/>
<path d="M797.5 150.6V301.1"/>
<path d="M815.6 150.6V301.1"/>
<path d="M832.3 150.6V301.1"/>
<path d="M974.5 150.6V301.1"/>
<path d="M1005 150.6V301.1"/>
</g>
<rect x="834.8" y="150.6" width="3.2" height="132.4" fill="#e35a50"/>
<rect x="834" y="156.3" width="5" height="1" fill="#525252"/>
<rect x="834" y="174.4" width="5" height="1" fill="#525252"/>
<rect x="834" y="192.3" width="5" height="1" fill="#525252"/>
<rect x="834" y="210.3" width="5" height="1" fill="#525252"/>
<rect x="834" y="228.4" width="5" height="1" fill="#525252"/>
<rect x="834" y="246.4" width="5" height="1" fill="#525252"/>
<rect x="834" y="264.5" width="5" height="1" fill="#4e698a"/>
<rect x="834" y="282.5" width="5" height="1" fill="#4e698a"/>
<rect x="834.8" y="284" width="3.2" height="16.500" fill="#d94fd9"/>
<clipPath id="lc"><rect x="797.5" y="150.6" width="207.5" height="151"/></clipPath><g clip-path="url(#lc)"><rect x="880.6" y="140.4" width="14" height="14.4" fill="#fff" stroke="#111" stroke-width=".9"/>
<path d="M881.2 141.0L894.0 150.8L894.0 154.2Z" fill="#111"/>
<circle cx="983.2" cy="147.9" r="3.3" fill="#a4a4a4"/></g>
<rect x="880.6" y="158.4" width="14" height="14.4" fill="#fff" stroke="#111" stroke-width=".9"/>
<path d="M881.2 159.0L894.0 169.1L894.0 172.2Z" fill="#111"/>
<circle cx="983.2" cy="165.9" r="3.3" fill="#a4a4a4"/>
<rect x="880.6" y="176.5" width="14" height="14.4" fill="#fff" stroke="#111" stroke-width=".9"/>
<path d="M881.2 190.3L894.0 179.8L894.0 177.1Z" fill="#111"/>
<circle cx="983.2" cy="184" r="3.3" fill="#a4a4a4"/>
<rect x="880.6" y="194.4" width="14" height="14.4" fill="#fff" stroke="#111" stroke-width=".9"/>
<path d="M881.2 208.2L894.0 198.1L894.0 195.0Z" fill="#111"/>
<circle cx="983.2" cy="201.9" r="3.3" fill="#a4a4a4"/>
<rect x="880.6" y="212.4" width="14" height="14.4" fill="#fff" stroke="#111" stroke-width=".9"/>
<path d="M881.2 218.9L894.0 219.5L894.0 222.2Z" fill="#111"/>
<circle cx="983.2" cy="219.9" r="3.3" fill="#a4a4a4"/>
<rect x="880.6" y="230.5" width="14" height="14.4" fill="#fff" stroke="#111" stroke-width=".9"/>
<path d="M881.2 235.7L894.0 237.9L894.0 241.0Z" fill="#111"/>
<circle cx="983.2" cy="238" r="3.3" fill="#a4a4a4"/>
<rect x="880.6" y="248.5" width="14" height="14.4" fill="#fff" stroke="#111" stroke-width=".9"/>
<path d="M881.2 249.1L894.0 259.2L894.0 262.3Z" fill="#111"/>
<circle cx="983.2" cy="256" r="3.3" fill="#a4a4a4"/>
<rect x="880.6" y="266.6" width="14" height="14.4" fill="#fff" stroke="#111" stroke-width=".9"/><ellipse cx="887.6" cy="273.8" rx="5.2" ry="3.2" fill="#f39a0a"/>
<circle cx="983.2" cy="274" r="5.2" fill="none" stroke="#d8d8d8" stroke-width=".9"/><circle cx="983.2" cy="274" r="3.1" fill="#b0b0b0"/>
<rect x="992.6" y="270.8" width="6.4" height="6.4" fill="#f0525a" stroke="#222" stroke-width=".8"/>
<path d="M801 273.500c2.700-4.500 8-4.500 10.700 0-2.700 4.500-8 4.500-10.700 0z" fill="#e4e4e4"/><circle cx="806.300" cy="273.500" r="2.300" fill="#4e698a"/><circle cx="806.300" cy="273.500" r="1.100" fill="#e4e4e4"/>
<path d="M844.800 288.500 848.200 292 844.800 295.500" fill="none" stroke="#d0d0d0" stroke-width="1.200"/>
<rect x="860.600" y="284.800" width="14.200" height="14.400" fill="#fff" stroke="#111" stroke-width=".9"/><path d="M863 290l3-2 2.500.5 3-1.300.5 3.500-3 1-2.500-.3-3 1.600z" fill="#f2762e"/><path d="M864 294.500l2.500-.8 2 .3 2.500-1" stroke="#e8a020" stroke-width="1.200" fill="none"/>
<circle cx="983.200" cy="292" r="3" fill="none" stroke="#d0d0d0" stroke-width="1"/>
<rect id="sbt" x="1005.300" y="150.600" width="10.700" height="150.500" fill="#494949"/><rect x="1006.600" y="238.500" width="7" height="52" rx="3.500" fill="#6b6b6b"/>
<path d="M1007 157 1010 154 1013 157M1007 293 1010 296 1013 293" fill="none" stroke="#a5a5a5" stroke-width="1"/>
</svg>
<div class="t" style="left:899.8px;top:160.9px;font-size:10.1px;color:#dedede;">&lt;パス&gt;</div>
<div class="t" style="left:899.8px;top:179px;font-size:10.1px;color:#dedede;">&lt;パス&gt;</div>
<div class="t" style="left:899.8px;top:196.9px;font-size:10.1px;color:#dedede;">&lt;パス&gt;</div>
<div class="t" style="left:899.8px;top:214.9px;font-size:10.1px;color:#dedede;">&lt;パス&gt;</div>
<div class="t" style="left:899.8px;top:233px;font-size:10.1px;color:#dedede;">&lt;パス&gt;</div>
<div class="t" style="left:899.8px;top:251px;font-size:10.1px;color:#dedede;">&lt;パス&gt;</div>
<div class="a" style="left:899px;top:150.6px;width:36px;height:6px;overflow:hidden"><div style="position:absolute;left:0;top:-6.6px"><div class="t" style="left:0.8px;top:0px;font-size:10.1px;color:#dedede;">&lt;パス&gt;</div></div></div>
<div class="t" style="left:899.8px;top:269.1px;font-size:10.1px;color:#ffffff;">&lt;スター&gt;</div>
<div class="t" style="left:880.4px;top:287.1px;font-size:10.3px;color:#dedede;">アメコミ吹...</div>
<div class="t" style="left:797.3px;top:303px;font-size:10.6px;color:#d6d6d6;">3レイヤー</div>
<svg style="left:0;top:0" width="1024" height="723" viewBox="0 0 1024 723" fill="none" stroke="#cfcfcf" stroke-width="1.1">
<path d="M855.500 304v9M853.500 306h10M862.500 304v5M853.500 311.500h5"/><path d="M860.500 309.500h4.500v5l-2.200-1.500-2.300 1.500z" fill="#cfcfcf" stroke="none"/>
<path d="M880.500 305.500h-4.500v8.500h8.500v-4.500M879.500 310.500 885.500 304.500M881.500 304h4.500v4.500"/>
<circle cx="901.500" cy="307.300" r="3.300"/><path d="M904 310 907.500 313.500" stroke-width="1.700"/>
<g stroke="#6c6c6c"><rect x="920.500" y="305" width="6" height="6"/><rect x="923" y="307.500" width="5" height="5" fill="#6c6c6c"/>
<path d="M941 306.500h3v3M944 309.500l-3.500-3.500"/><rect x="945.500" y="305.500" width="7" height="7"/><path d="M949 307v4M947 309h4"/></g>
<rect x="965.500" y="304" width="9" height="9"/><path d="M970 306v5M967.500 308.500h5"/>
<path d="M987 305.500h8.500M989.500 305.500v-1.500h3.500v1.500M988 305.500l.6 8.300h5.300l.6-8.300M990 307.500v4.500M992.500 307.500v4.500"/>
</svg><div class="a" style="left:793.5px;top:320px;width:227px;height:22.500px;background:#434343"></div>
<div class="a" style="left:793.5px;top:342.5px;width:227px;height:203.5px;background:#525252"></div>
<div class="a" style="left:866.5px;top:320px;width:69.5px;height:23px;background:#525252"></div>
<div class="a" style="left:821px;top:321px;width:1px;height:21px;background:#3d3d3d"></div>
<div class="a" style="left:845px;top:321px;width:1px;height:21px;background:#3d3d3d"></div>
<div class="t" style="left:800.3px;top:325.8px;font-size:9.6px;color:#bdbdbd;letter-spacing:-.05em;">変形</div>
<div class="t" style="left:825px;top:325.8px;font-size:9.6px;color:#bdbdbd;letter-spacing:-.05em;">整列</div>
<div class="t" style="left:849.3px;top:325.8px;font-size:9.6px;color:#bdbdbd;letter-spacing:-.05em;">パス</div>
<div class="t" style="left:872.9px;top:325.5px;font-size:9.9px;color:#ffffff;font-weight:500;letter-spacing:-.06em;">アピアランス</div>
<div class="t" style="left:945px;top:325.8px;font-size:9.6px;color:#bdbdbd;letter-spacing:-.05em;">ブラ</div>
<div class="t" style="left:968.4px;top:325.8px;font-size:9.6px;color:#bdbdbd;letter-spacing:-.05em;">シン</div>
<div class="a" style="left:1006.5px;top:327.5px;width:9px;height:7px;border-top:1.1px solid #bebebe;border-bottom:1.1px solid #bebebe;box-sizing:border-box"></div><div class="a" style="left:1006.5px;top:330.35px;width:9px;height:1.1px;background:#bebebe"></div>
<div class="a" style="left:819px;top:499.5px;width:197px;height:21px;background:#4e698a"></div>
<svg style="left:0;top:0" width="1024" height="723" viewBox="0 0 1024 723">
<defs><linearGradient id="og" x1="0" y1="0" x2="0" y2="1"><stop offset="0" stop-color="#ffb000"/><stop offset="1" stop-color="#f79400"/></linearGradient><linearGradient id="wb"><stop offset="0" stop-color="#fff"/><stop offset=".45" stop-color="#eee"/><stop offset="1" stop-color="#111"/></linearGradient></defs>
<g stroke="#5c5c5c" stroke-width=".6" stroke-dasharray="1 1">
<path d="M797.500 370.3H1016"/>
<path d="M797.500 392H1016"/>
<path d="M797.500 413.6H1016"/>
<path d="M797.500 435H1016"/>
<path d="M797.500 456.7H1016"/>
<path d="M797.500 477.8H1016"/>
<path d="M797.500 499.4H1016"/>
<path d="M797.500 521H1016"/>
<path d="M818.900 370.300V521"/>
</g>
<rect x="800.700" y="352.200" width="15.400" height="15.400" fill="#f4f4f4"/><rect x="802.600" y="354.100" width="11.600" height="11.600" fill="url(#og)" stroke="#5a3d10" stroke-width=".9"/>
<path d="M802.300 381.5c2.700-4.300 8-4.300 10.700 0-2.700 4.300-8 4.300-10.700 0z" fill="#d8d8d8"/><circle cx="807.650" cy="381.5" r="2.300" fill="#525252"/><circle cx="807.650" cy="381.5" r="1.100" fill="#d8d8d8"/>
<path d="M802.300 403.1c2.700-4.300 8-4.300 10.700 0-2.700 4.300-8 4.300-10.700 0z" fill="#6e6e6e"/><circle cx="807.650" cy="403.1" r="2.300" fill="#525252"/><circle cx="807.650" cy="403.1" r="1.100" fill="#6e6e6e"/>
<path d="M802.300 424.3c2.700-4.300 8-4.300 10.700 0-2.700 4.300-8 4.300-10.700 0z" fill="#d8d8d8"/><circle cx="807.650" cy="424.3" r="2.300" fill="#525252"/><circle cx="807.650" cy="424.3" r="1.100" fill="#d8d8d8"/>
<path d="M802.300 445.4c2.700-4.300 8-4.300 10.700 0-2.700 4.300-8 4.300-10.700 0z" fill="#d8d8d8"/><circle cx="807.650" cy="445.4" r="2.300" fill="#525252"/><circle cx="807.650" cy="445.4" r="1.100" fill="#d8d8d8"/>
<path d="M802.300 467.1c2.700-4.300 8-4.300 10.700 0-2.700 4.300-8 4.300-10.700 0z" fill="#d8d8d8"/><circle cx="807.650" cy="467.1" r="2.300" fill="#525252"/><circle cx="807.650" cy="467.1" r="1.100" fill="#d8d8d8"/>
<path d="M802.300 488.3c2.700-4.300 8-4.300 10.700 0-2.700 4.300-8 4.300-10.700 0z" fill="#d8d8d8"/><circle cx="807.650" cy="488.3" r="2.300" fill="#525252"/><circle cx="807.650" cy="488.3" r="1.100" fill="#d8d8d8"/>
<path d="M825.600 380 828.600 383 831.600 380" fill="none" stroke="#d0d0d0" stroke-width="1.200"/>
<path d="M825.600 422.8 828.600 425.800 831.600 422.800" fill="none" stroke="#d0d0d0" stroke-width="1.200"/>
<path d="M827.300 485.300 830.300 488.300 827.300 491.300" fill="none" stroke="#d0d0d0" stroke-width="1.200"/>
<rect x="900" y="375" width="12.700" height="12.700" fill="#000" stroke="#e6e6e6" stroke-width="1"/><rect x="901.600" y="376.600" width="9.500" height="9.500" fill="none" stroke="#555" stroke-width=".6"/>
<rect x="900.800" y="418.800" width="11.400" height="11.200" fill="url(#wb)" stroke="#e6e6e6" stroke-width=".9"/>
<rect x="900.800" y="482.800" width="11.400" height="11.200" fill="#ff9800" stroke="#e6e6e6" stroke-width=".9"/>
<text x="1000.500" y="449.300" font-family="Liberation Sans, sans-serif" font-style="italic" font-size="11.500" fill="#bdbdbd">fx</text>
<g fill="none" stroke="#cfcfcf" stroke-width="1.200"><rect x="803.500" y="532" width="8" height="8"/><rect x="826.500" y="532" width="8.500" height="8.500"/><rect x="828.300" y="533.800" width="5" height="5" fill="#cfcfcf" stroke="none"/>
<circle cx="947" cy="536.500" r="4.300"/><path d="M944 533.500 950 539.500"/>
<path d="M987 532.500h8.500M989.500 532.500v-1.500h3.500v1.500M988 532.500l.6 8.300h5.300l.6-8.300M990 534.500v4.500M992.500 534.500v4.500" stroke-width="1.100"/></g>
<g fill="none" stroke="#6a6a6a" stroke-width="1"><rect x="965.500" y="531.500" width="9" height="10"/><path d="M970 534v5M967.500 536.500h5"/></g>
<text x="847.500" y="540.300" font-family="Liberation Sans, sans-serif" font-style="italic" font-size="11.500" fill="#cfcfcf">fx.</text>
<rect x="846.800" y="450.500" width="122.600" height="28.600" rx="14.300" fill="none" stroke="#e25a66" stroke-width="2.500"/>
</svg>
<div class="t b" style="left:841.8px;top:354.3px;font-size:10.3px;color:#ffffff;">パス</div>
<div class="t u" style="left:841px;top:375.5px;font-size:10.3px;color:#e0e0e0;">線<span style="margin-left:.28em"></span>:</div>
<div class="t" style="left:926.4px;top:375.500px;font-size:11.300px;color:#dedede">4 pt</div>
<div class="t u" style="left:861.2px;top:397.1px;font-size:10.2px;color:#e0e0e0;">不透明度<span style="margin-left:.28em"></span>:</div>
<div class="t" style="left:932px;top:397.1px;font-size:10.15px;color:#d6d6d6;">初期設定</div>
<div class="t" style="left:841px;top:418.3px;font-size:10.3px;color:#e0e0e0;">塗り<span style="margin-left:.28em"></span>:</div>
<div class="t u" style="left:861.2px;top:439.4px;font-size:9.9px;color:#e0e0e0;">カラーハーフトーン</div>
<div class="t u" style="left:861.2px;top:461.1px;font-size:10.2px;color:#e8e8e8;">不透明度<span style="margin-left:.28em"></span>:</div>
<div class="t" style="left:919px;top:461.100px;font-size:11.300px;color:#e8e8e8">20%</div>
<div class="t" style="left:841px;top:482.3px;font-size:10.3px;color:#e0e0e0;">塗り<span style="margin-left:.28em"></span>:</div><div class="a" style="left:793.5px;top:547.5px;width:227px;height:22.500px;background:#434343"></div>
<div class="a" style="left:793.5px;top:570px;width:227px;height:153px;background:#525252"></div>
<div class="a" style="left:793.5px;top:547.5px;width:38.5px;height:23px;background:#525252"></div>
<div class="a" style="left:858.5px;top:548.5px;width:1px;height:21px;background:#3d3d3d"></div>
<div class="a" style="left:884.3px;top:548.5px;width:1px;height:21px;background:#3d3d3d"></div>
<div class="a" style="left:910.9px;top:548.5px;width:1px;height:21px;background:#3d3d3d"></div>
<div class="a" style="left:936.7px;top:548.5px;width:1px;height:21px;background:#3d3d3d"></div>
<div class="a" style="left:962px;top:548.5px;width:1px;height:21px;background:#3d3d3d"></div>
<div class="a" style="left:987.3px;top:548.5px;width:1px;height:21px;background:#3d3d3d"></div>
<svg style="left:796.5px;top:553.5px" width="6" height="10" viewBox="0 0 6 10"><path d="M1 3.800 3 1.500 5 3.800M1 6.200 3 8.500 5 6.200" fill="none" stroke="#a8a8a8" stroke-width=".9"/></svg>
<div class="t b" style="left:805.6px;top:552.9px;font-size:10px;color:#ffffff;">線</div>
<div class="t" style="left:840px;top:553px;font-size:9.7px;color:#bdbdbd;letter-spacing:-.04em;">文字</div>
<div class="t" style="left:865.9px;top:553px;font-size:9.7px;color:#bdbdbd;letter-spacing:-.04em;">段落</div>
<div class="t" style="left:891.2px;top:553.1px;font-size:10.1px;color:#bdbdbd">Ope</div>
<div class="t" style="left:917.7px;top:553px;font-size:9.7px;color:#bdbdbd;letter-spacing:-.06em;">グラ</div>
<div class="t" style="left:942.3px;top:553px;font-size:9.6px;color:#bdbdbd;letter-spacing:-.06em;">アク</div>
<div class="t" style="left:968px;top:553px;font-size:9.6px;color:#bdbdbd;letter-spacing:-.06em;">リン</div>
<div class="a" style="left:1006.5px;top:554.7px;width:9px;height:7px;border-top:1.1px solid #bebebe;border-bottom:1.1px solid #bebebe;box-sizing:border-box"></div><div class="a" style="left:1006.5px;top:557.55px;width:9px;height:1.1px;background:#bebebe"></div>
<div class="t" style="left:818px;top:579.5px;font-size:10.2px;color:#d8d8d8;">線幅<span style="margin-left:.28em"></span>:</div>
<div class="dd" style="left:848.2px;top:576.7px;width:13.4px;height:15.8px;border-radius:2px"></div>
<svg style="left:851px;top:578px" width="8" height="13" viewBox="0 0 8 13"><path d="M1 4.500 4 1.500 7 4.500M1 8.500 4 11.500 7 8.500" fill="none" stroke="#d8d8d8" stroke-width="1.200"/></svg>
<div class="fld" style="left:863.6px;top:576.7px;width:54.2px;height:15.8px;background:#404040"></div>
<div class="t" style="left:866.3px;top:578.7px;font-size:11.4px;color:#e6e6e6">4 pt</div>
<div class="dd" style="left:919px;top:576.7px;width:14.7px;height:15.8px"></div>
<svg style="left:922.3px;top:582px" width="8" height="6" viewBox="0 0 8 6"><path d="M1 1.200 4 4.200 7 1.200" fill="none" stroke="#d8d8d8" stroke-width="1.300"/></svg>
<div class="t" style="left:818px;top:601.8px;font-size:10.2px;color:#d8d8d8;">線端<span style="margin-left:.28em"></span>:</div>
<div class="t" style="left:797.6px;top:624.6px;font-size:10.2px;color:#d8d8d8;">角の形状<span style="margin-left:.28em"></span>:</div>
<div class="t" style="left:797.6px;top:647.8px;font-size:10.2px;color:#d8d8d8;">線の位置<span style="margin-left:.28em"></span>:</div>
<div class="t" style="left:936.2px;top:624.6px;font-size:10.2px;color:#d8d8d8;">比率<span style="margin-left:.28em"></span>:</div>
<div class="fld" style="left:965.3px;top:622.2px;width:40.5px;height:16px;background:#404040"></div>
<div class="t" style="left:969px;top:624.4px;font-size:11.4px;color:#e6e6e6">4</div>
<svg style="left:0;top:0" width="1024" height="723" viewBox="0 0 1024 723">
<rect x="848.1" y="598.9" width="16.8" height="16.6" fill="#2b2b2b" stroke="#2b2b2b" stroke-width=".7"/>
<rect x="868.2" y="598.9" width="16.8" height="16.6" fill="#525252" stroke="#5f5f5f" stroke-width=".7"/>
<rect x="886.7" y="598.9" width="16.8" height="16.6" fill="#525252" stroke="#5f5f5f" stroke-width=".7"/>
<rect x="855.2" y="602.1" width="6.9" height="10.8" fill="#fff"/><path d="M853.2 607.6 H859" stroke="#2b2b2b" stroke-width="1.2"/><circle cx="854.6" cy="607.6" r="1.35" fill="#2b2b2b" stroke="#fff" stroke-width=".7"/>
<path d="M881.6 602.1h-5.400a5.400 5.400 0 0 0 0 10.800h5.400z" fill="#d2d2d2"/><path d="M875.800 607.6H881.600" stroke="#525252" stroke-width="1.200"/><circle cx="875.800" cy="607.6" r="1.300" fill="#525252"/>
<rect x="890.700" y="602.100" width="10.400" height="10.800" fill="#d2d2d2"/><path d="M895.300 607.6H901.100" stroke="#525252" stroke-width="1.200"/><circle cx="895.300" cy="607.6" r="1.300" fill="#525252"/>
<rect x="848.1" y="622" width="16.8" height="16.6" fill="#2b2b2b" stroke="#2b2b2b" stroke-width=".7"/>
<rect x="868.2" y="622" width="16.8" height="16.6" fill="#525252" stroke="#5f5f5f" stroke-width=".7"/>
<rect x="886.7" y="622" width="16.8" height="16.6" fill="#525252" stroke="#5f5f5f" stroke-width=".7"/>
<rect x="851.300" y="624.900" width="11.100" height="10.900" fill="#fff"/><path d="M855.800 635.800V629.700H862.400" fill="none" stroke="#2b2b2b" stroke-width="1.100"/><circle cx="855.800" cy="629.700" r="1.150" fill="#2b2b2b"/>
<path d="M870.800 635.800v-5.400a5.500 5.500 0 0 1 5.500-5.500h5.300v10.900z" fill="#d2d2d2"/><path d="M875.300 635.800V629.700H881.600" fill="none" stroke="#525252" stroke-width="1.100"/><circle cx="875.300" cy="629.700" r="1.150" fill="#525252"/>
<path d="M890.700 635.800v-6.400l4.500-4.500h5.900v10.900z" fill="#d2d2d2"/><path d="M895.200 635.800V629.700H901.100" fill="none" stroke="#525252" stroke-width="1.100"/><circle cx="895.200" cy="629.700" r="1.150" fill="#525252"/>
<rect x="848.1" y="644.9" width="16.8" height="16.9" fill="#2b2b2b" stroke="#2b2b2b" stroke-width=".7"/>
<rect x="868.2" y="644.9" width="16.8" height="16.9" fill="#525252" stroke="#5f5f5f" stroke-width=".7"/>
<rect x="886.7" y="644.9" width="16.8" height="16.9" fill="#525252" stroke="#5f5f5f" stroke-width=".7"/>
<path d="M851.300 648h4.600v6.400h6.500v4.300h-11.100z" fill="#fff"/><path d="M853.500 648V656.600H862.400" fill="none" stroke="#2b2b2b" stroke-width=".9"/>
<path d="M873.400 648h4.200v6.400h6.200v4h-10.400z" fill="#d2d2d2"/><path d="M871.600 649V659.300H883.800" fill="none" stroke="#d2d2d2" stroke-width=".8"/><circle cx="871.600" cy="659.300" r="1.200" fill="#525252" stroke="#d2d2d2" stroke-width=".7"/>
<path d="M890.700 648h5.500v5.400h5v5.300h-10.500z" fill="#d2d2d2"/><path d="M895.500 648V654H901.200" fill="none" stroke="#525252" stroke-width=".9"/><circle cx="895.500" cy="654" r="1.150" fill="#525252"/>
<rect x="798.800" y="677.800" width="9.200" height="9.200" rx="1.200" fill="none" stroke="#d6d6d6" stroke-width="1.100"/>
<rect x="950.600" y="674" width="31.300" height="17.300" fill="none" stroke="#5f5f5f" stroke-width=".7"/><rect x="981.900" y="674" width="34.300" height="17.300" fill="none" stroke="#5f5f5f" stroke-width=".7"/>
<g fill="none" stroke="#8a8a8a" stroke-width="1.200"><path d="M955 682v-3.500h4M963 678.500h8M975 678.500h3.500v3.500M978.500 684v3h-4M971 687h-8M959 687h-4v-3" /><path d="M988.500 681.500v-3h3.500M997 678.500h6M1008 678.500h3.500v3M1011.500 684v3h-3.500M1003 687h-6M992 687h-3.500v-3"/></g>
<rect x="797.6" y="696.300" width="33.500" height="18.200" fill="#585858"/>
<rect x="834.5" y="696.300" width="33.500" height="18.200" fill="#585858"/>
<rect x="871.4" y="696.300" width="33.500" height="18.200" fill="#585858"/>
<rect x="908.3" y="696.300" width="33.500" height="18.200" fill="#585858"/>
<rect x="945.2" y="696.300" width="33.500" height="18.200" fill="#585858"/>
<rect x="982.1" y="696.300" width="33.500" height="18.200" fill="#585858"/>
</svg>
<div class="t" style="left:813.5px;top:676.2px;font-size:10.2px;color:#e0e0e0;">破線</div>
<div class="t" style="left:797.6px;top:699.5px;font-size:10.6px;color:#6b6b6b;width:33.5px;text-align:center">12 pt</div>
<div class="t" style="left:804.6px;top:715.2px;font-size:9.8px;color:#858585;">線分</div>
<div class="t" style="left:834.5px;top:699.5px;font-size:10.6px;color:#6b6b6b;width:33.5px;text-align:center">0 pt</div>
<div class="t" style="left:841.5px;top:715.2px;font-size:9.8px;color:#858585;">間隔</div>
<div class="t" style="left:871.4px;top:699.5px;font-size:10.6px;color:#6b6b6b;width:33.5px;text-align:center">0 pt</div>
<div class="t" style="left:878.4px;top:715.2px;font-size:9.8px;color:#858585;">線分</div>
<div class="t" style="left:908.3px;top:699.5px;font-size:10.6px;color:#6b6b6b;width:33.5px;text-align:center">0 pt</div>
<div class="t" style="left:915.3px;top:715.2px;font-size:9.8px;color:#858585;">間隔</div>
<div class="t" style="left:945.2px;top:699.5px;font-size:10.6px;color:#6b6b6b;width:33.5px;text-align:center">0 pt</div>
<div class="t" style="left:952.2px;top:715.2px;font-size:9.8px;color:#858585;">線分</div>
<div class="t" style="left:982.1px;top:699.5px;font-size:10.6px;color:#6b6b6b;width:33.5px;text-align:center">0 pt</div>
<div class="t" style="left:989.1px;top:715.2px;font-size:9.8px;color:#858585;">間隔</div>
<svg style="left:0;top:0" width="1024" height="723" viewBox="0 0 1024 723" aria-label="不透明度を下げる">
<text x="708.5" y="521.9" font-family="Liberation Sans, Noto Sans CJK JP, sans-serif" font-size="32.4" font-weight="bold" fill="#fff" stroke="#fff" stroke-width="9" stroke-linejoin="round" style="filter:drop-shadow(0 1px 2.5px rgba(0,0,0,.32))">不透明度を下げる</text>
<text x="708.5" y="521.9" font-family="Liberation Sans, Noto Sans CJK JP, sans-serif" font-size="32.4" font-weight="bold" fill="#ea4d59">不透明度を下げる</text>
</svg>

</div></body></html>
